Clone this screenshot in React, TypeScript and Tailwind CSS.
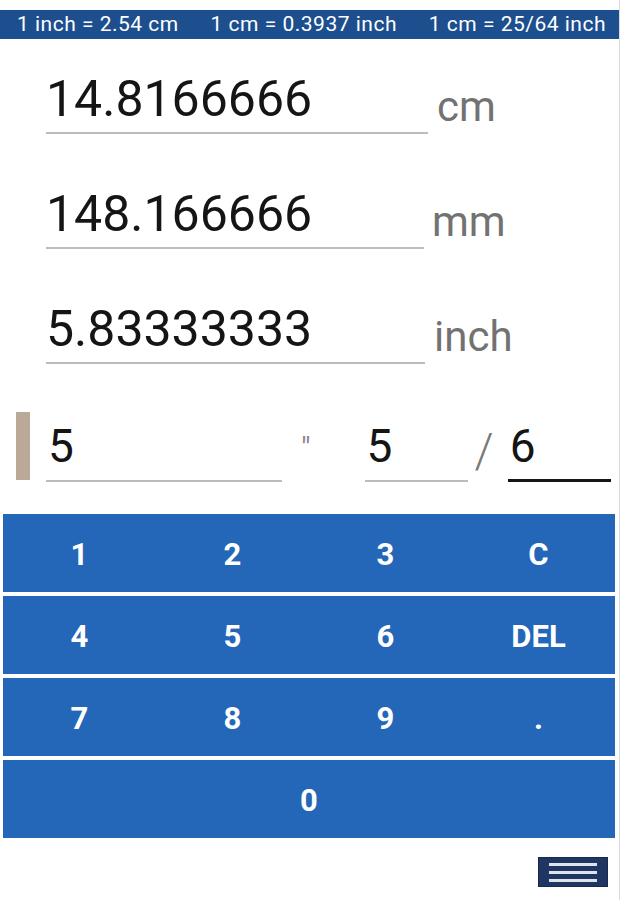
import React from 'react'

type FieldProps = {
  value: string
  unit: string
  width: string
  unitGap: string
  top: string
}

function Field({ value, unit, width, unitGap, top }: FieldProps) {
  return (
    <div className={`flex items-end pl-[46px] ${top}`}>
      <div className={`${width} border-b-2 border-[#bcbcbc] pb-[8px] text-[50px] leading-none text-[#151515]`}>
        {value}
      </div>
      <span className={`${unitGap} mb-[6px] text-[42px] leading-none text-[#727272]`}>{unit}</span>
    </div>
  )
}

const keys = [
  ['1', '2', '3', 'C'],
  ['4', '5', '6', 'DEL'],
  ['7', '8', '9', '.'],
]

export default function App() {
  return (
    <main className="w-[622px] h-[900px] bg-white overflow-hidden font-['Roboto',sans-serif]">
      <div className="w-[620px] h-full border-r border-[#d6dce5] flex flex-col">
        <div className="h-[10px]" />
        <div className="h-[29px] bg-[#1d4e8e] flex items-center justify-between pl-[17px] pr-[13px] text-white text-[21px] leading-none tracking-[0.5px]">
          <span>1 inch = 2.54 cm</span>
          <span>1 cm = 0.3937 inch</span>
          <span>1 cm = 25/64 inch</span>
        </div>

        <Field value="14.8166666" unit="cm" width="w-[382px]" unitGap="ml-[9px]" top="mt-[35px]" />
        <Field value="148.166666" unit="mm" width="w-[378px]" unitGap="ml-[8px]" top="mt-[55px]" />
        <Field value="5.83333333" unit="inch" width="w-[379px]" unitGap="ml-[9px]" top="mt-[55px]" />

        <div className="flex items-end mt-[48px]">
          <div className="ml-[16px] mb-[2px] w-[14px] h-[68px] bg-[#baa996]" />
          <div className="ml-[16px] w-[236px] border-b-2 border-[#bcbcbc] pb-[11px] pl-[2px] text-[46px] leading-none text-[#151515]">
            5
          </div>
          <span className="self-start mt-[21px] ml-[19px] text-[30px] leading-none text-[#8a8a8a]">"</span>
          <div className="ml-[54px] w-[103px] border-b-2 border-[#bcbcbc] pb-[11px] pl-[2px] text-[46px] leading-none text-[#151515]">
            5
          </div>
          <span className="ml-[7px] mb-[7px] text-[48px] font-light leading-none text-[#7a7a7a]">/</span>
          <div className="ml-[14px] w-[103px] border-b-[3px] border-[#161616] pb-[10px] pl-[2px] text-[46px] leading-none text-[#151515]">
            6
          </div>
        </div>

        <div className="mt-[32px] ml-[3px] w-[612px] flex flex-col gap-[4px]">
          {keys.map((row, i) => (
            <div key={i} className="h-[78px] bg-[#2466b7] grid grid-cols-4">
              {row.map((k) => (
                <div key={k} className="flex items-center justify-center pt-[3px] text-white text-[31px] font-bold leading-none">
                  {k}
                </div>
              ))}
            </div>
          ))}
          <div className="h-[78px] bg-[#2466b7] flex items-center justify-center pt-[3px] text-white text-[31px] font-bold leading-none">
            0
          </div>
        </div>

        <div className="self-end mr-[11px] mt-[19px] w-[70px] h-[30px] bg-[#1f3562] border border-[#17294d] flex flex-col items-center justify-center gap-[5px]">
          <div className="w-[48px] h-[3px] bg-[#dfe3ea]" />
          <div className="w-[48px] h-[3px] bg-[#dfe3ea]" />
          <div className="w-[48px] h-[3px] bg-[#dfe3ea]" />
        </div>
      </div>
    </main>
  )
}
